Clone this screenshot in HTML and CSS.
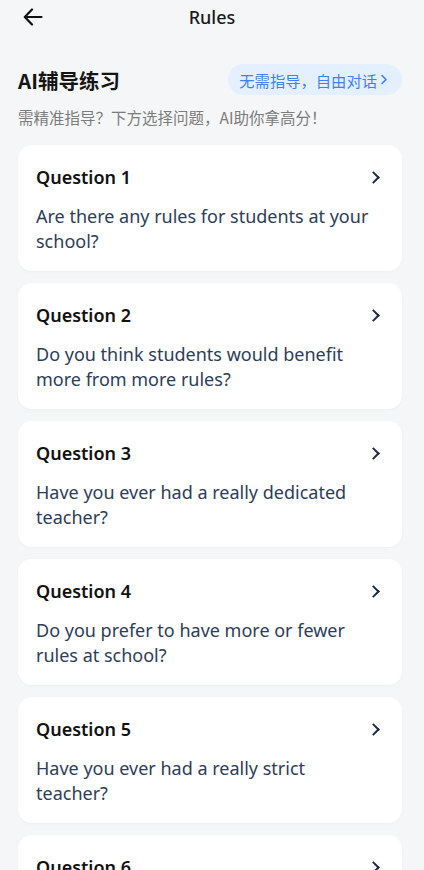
FILE: index.html
```html
<!DOCTYPE html>
<html lang="zh-CN">

<head>
    <meta charset="UTF-8">
    <meta name="viewport" content="width=device-width, initial-scale=1.0">
    <link rel="stylesheet" href="styles.css">
    <title>Rules</title>
</head>

<body>
    <div class="header">
        <span class="back">
            <svg width="20" height="18" viewBox="0 0 20 18" fill="none" stroke="#111" stroke-width="2.2" stroke-linecap="round" stroke-linejoin="round"><path d="M18.5 9H2M9 1.5L1.8 9 9 16.5"/></svg>
        </span>
        <h1 class="title">Rules</h1>
    </div>

    <div class="intro">
        <div class="intro-top">
            <h2>AI辅导练习</h2>
            <a class="free-btn">无需指导，自由对话<svg width="8" height="11" viewBox="0 0 8 11" fill="none" stroke="#3b82f6" stroke-width="1.6" stroke-linecap="round" stroke-linejoin="round"><path d="M2 1.5l4 4-4 4"/></svg></a>
        </div>
        <p class="tip">需精准指导？下方选择问题，AI助你拿高分！</p>
    </div>

    <ul class="list">
        <li class="card">
            <div class="card-head"><span>Question 1</span><i class="arrow"></i></div>
            <p>Are there any rules for students at your school?</p>
        </li>
        <li class="card">
            <div class="card-head"><span>Question 2</span><i class="arrow"></i></div>
            <p>Do you think students would benefit more from more rules?</p>
        </li>
        <li class="card">
            <div class="card-head"><span>Question 3</span><i class="arrow"></i></div>
            <p>Have you ever had a really dedicated teacher?</p>
        </li>
        <li class="card">
            <div class="card-head"><span>Question 4</span><i class="arrow"></i></div>
            <p>Do you prefer to have more or fewer rules at school?</p>
        </li>
        <li class="card">
            <div class="card-head"><span>Question 5</span><i class="arrow"></i></div>
            <p>Have you ever had a really strict teacher?</p>
        </li>
        <li class="card">
            <div class="card-head"><span>Question 6</span><i class="arrow"></i></div>
        </li>
    </ul>
</body>

</html>
```
FILE: styles.css
```css
* {
    margin: 0;
    padding: 0;
    box-sizing: border-box;
}

ul,
li {
    list-style: none;
}

body {
    width: 424px;
    height: 870px;
    overflow: hidden;
    background-color: #f5f6f8;
    font-family: "Noto Sans", "Noto Sans CJK SC", sans-serif;
    color: #111;
}

.header {
    height: 34px;
    position: relative;
    display: flex;
    align-items: center;
    justify-content: center;
}

.back {
    position: absolute;
    left: 23px;
    top: 8px;
    display: flex;
}

.title {
    font-size: 18px;
    font-weight: 500;
    color: #1a1a1a;
}

.intro {
    padding: 30px 18px 0 18px;
}

.intro-top {
    display: flex;
    justify-content: space-between;
    align-items: center;
}

.intro-top h2 {
    font-size: 20.5px;
    font-weight: 700;
    font-family: "Noto Sans CJK SC", sans-serif;
    color: #151515;
}

.free-btn {
    display: flex;
    align-items: center;
    gap: 3px;
    height: 31px;
    padding: 0 14px 0 11px;
    margin-right: 4px;
    border-radius: 16px;
    background-color: #e4efff;
    color: #3b82f6;
    font-size: 15.3px;
    font-family: "Noto Sans CJK SC", sans-serif;
}

.tip {
    margin-top: 11px;
    font-size: 15.5px;
    color: #7c7c7c;
    font-family: "Noto Sans CJK SC", sans-serif;
}

.list {
    padding: 17px 22px 0 18px;
    display: flex;
    flex-direction: column;
    gap: 12px;
}

.card {
    background-color: #fff;
    border-radius: 14px;
    padding: 20px 24px 17px 18px;
    box-shadow: 0 1px 3px rgba(0, 0, 0, 0.03);
}

.card-head {
    display: flex;
    justify-content: space-between;
    align-items: center;
    height: 24px;
    font-size: 18px;
    font-weight: 600;
    color: #111;
}

.arrow {
    width: 9px;
    height: 9px;
    border-top: 2px solid #1c2a44;
    border-right: 2px solid #1c2a44;
    transform: rotate(45deg);
}

.card p {
    margin-top: 15px;
    font-size: 18px;
    line-height: 25px;
    color: #2e3d58;
}
```
